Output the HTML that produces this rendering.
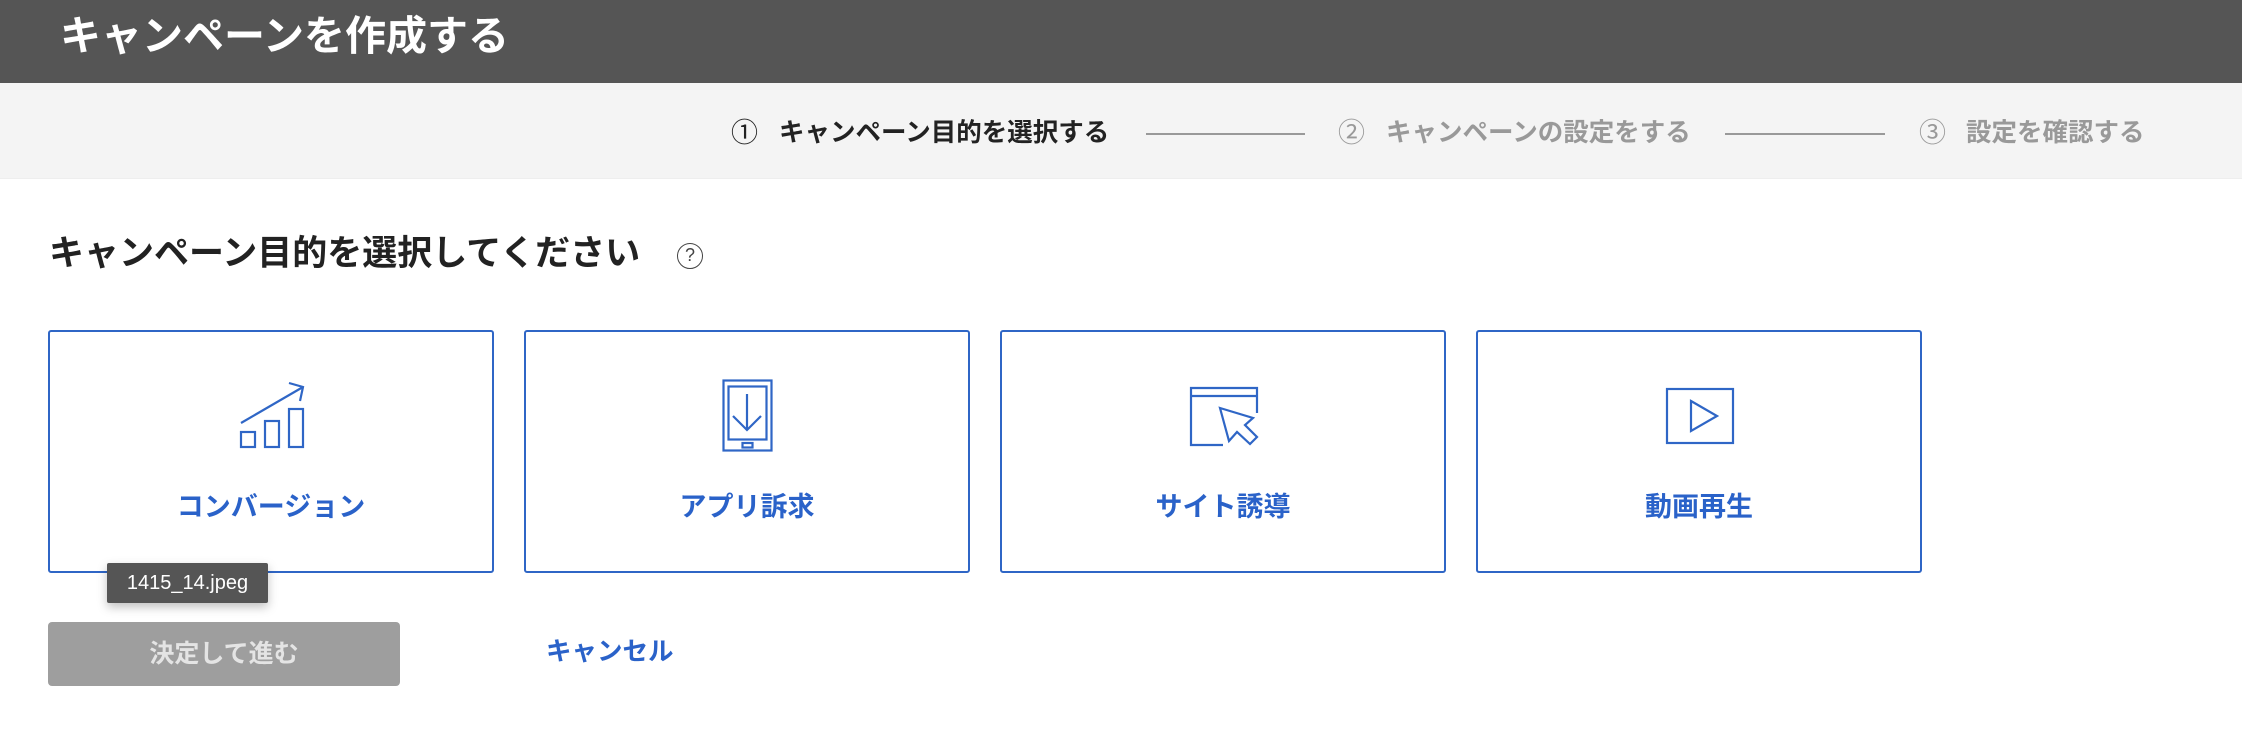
<!DOCTYPE html>
<html><head><meta charset="utf-8"><style>
*{margin:0;padding:0;box-sizing:border-box}
body{width:2242px;height:732px;background:#fff;font-family:"Liberation Sans","Noto Sans CJK JP",sans-serif;position:relative;overflow:hidden}
.hdr{position:absolute;left:0;top:0;width:2242px;height:83px;background:#555}
.hdr h1{position:absolute;left:60px;top:12px;font-size:41px;font-weight:bold;color:#fff;line-height:48px;white-space:nowrap}
.steps{position:absolute;left:0;top:83px;width:2242px;height:96px;background:#f4f4f4;border-bottom:1px solid #eee}
.st{position:absolute;top:35px;font-size:25.5px;font-weight:bold;line-height:30px;white-space:nowrap}
.c{position:absolute;top:35px;font-size:27px;line-height:30px}
.ln{position:absolute;top:50px;height:2px;background:#999}
h2{position:absolute;left:49px;top:232px;font-size:35px;font-weight:bold;color:#222;line-height:44px;white-space:nowrap}
.q{position:absolute;left:677px;top:243px;width:26px;height:26px;border:1.5px solid #444;border-radius:50%;font-size:18px;text-align:center;line-height:23px;color:#444}
.card{position:absolute;top:330px;width:446px;height:243px;border:2px solid #2f66c6;border-radius:3px;background:#fff}
.card .lb{position:absolute;left:0;right:0;top:157px;text-align:center;font-size:27px;font-weight:bold;color:#2a62c9;line-height:36px}
.tip{position:absolute;left:107px;top:563px;width:161px;height:40px;background:#555;color:#fff;font-size:20px;line-height:40px;text-align:center;border-radius:2px;box-shadow:0 4px 10px rgba(0,0,0,.25)}
.btn{position:absolute;left:48px;top:622px;width:352px;height:64px;background:#9e9e9e;border-radius:4px;color:#e4e4e4;font-size:25px;font-weight:bold;text-align:center;line-height:64px}
.cancel{position:absolute;left:546px;top:636px;font-size:25.5px;font-weight:bold;color:#2a62c9;line-height:32px}
</style></head><body>
<div class="hdr"><h1>キャンペーンを作成する</h1></div>
<div class="steps">
<div class="c" style="left:731px;color:#222">①</div>
<div class="st" style="left:779px;color:#222">キャンペーン目的を選択する</div>
<div class="ln" style="left:1146px;width:159px"></div>
<div class="c" style="left:1338px;color:#999">②</div>
<div class="st" style="left:1386px;color:#999">キャンペーンの設定をする</div>
<div class="ln" style="left:1725px;width:160px"></div>
<div class="c" style="left:1919px;color:#999">③</div>
<div class="st" style="left:1966px;color:#999">設定を確認する</div>
</div>
<h2>キャンペーン目的を選択してください</h2>
<div class="q">?</div>

<div class="card" style="left:48px"><div class="lb">コンバージョン</div></div>
<div class="card" style="left:524px"><div class="lb">アプリ訴求</div></div>
<div class="card" style="left:1000px"><div class="lb">サイト誘導</div></div>
<div class="card" style="left:1476px"><div class="lb">動画再生</div></div>

<svg width="2242" height="732" style="position:absolute;left:0;top:0" fill="none" stroke="#2f66c6" stroke-width="2.2">
<rect x="241" y="432" width="14" height="15"/><rect x="265" y="421" width="14" height="26"/><rect x="289" y="409" width="14" height="38"/>
<path d="M241 423 L303 387 M289 383 L303 387 L300 401"/>
<rect x="723.5" y="380.5" width="48" height="70"/><rect x="728.5" y="386.5" width="38" height="53"/><rect x="742.5" y="443" width="10" height="4.5"/>
<path d="M747 394 V429 M733 416 L747 430 L761 416"/>
<path d="M1223 445 H1191 V388 H1257 V413 M1191 396 H1257"/>
<path d="M1220 408 L1253 418 L1245 425 L1257 437 L1250 444 L1237 432 L1229 441 Z"/>
<rect x="1667" y="389" width="66" height="54"/><path d="M1691 401 L1717 416 L1691 431 Z"/>
</svg>

<div class="tip">1415_14.jpeg</div>
<div class="btn">決定して進む</div>
<div class="cancel">キャンセル</div>
</body></html>
